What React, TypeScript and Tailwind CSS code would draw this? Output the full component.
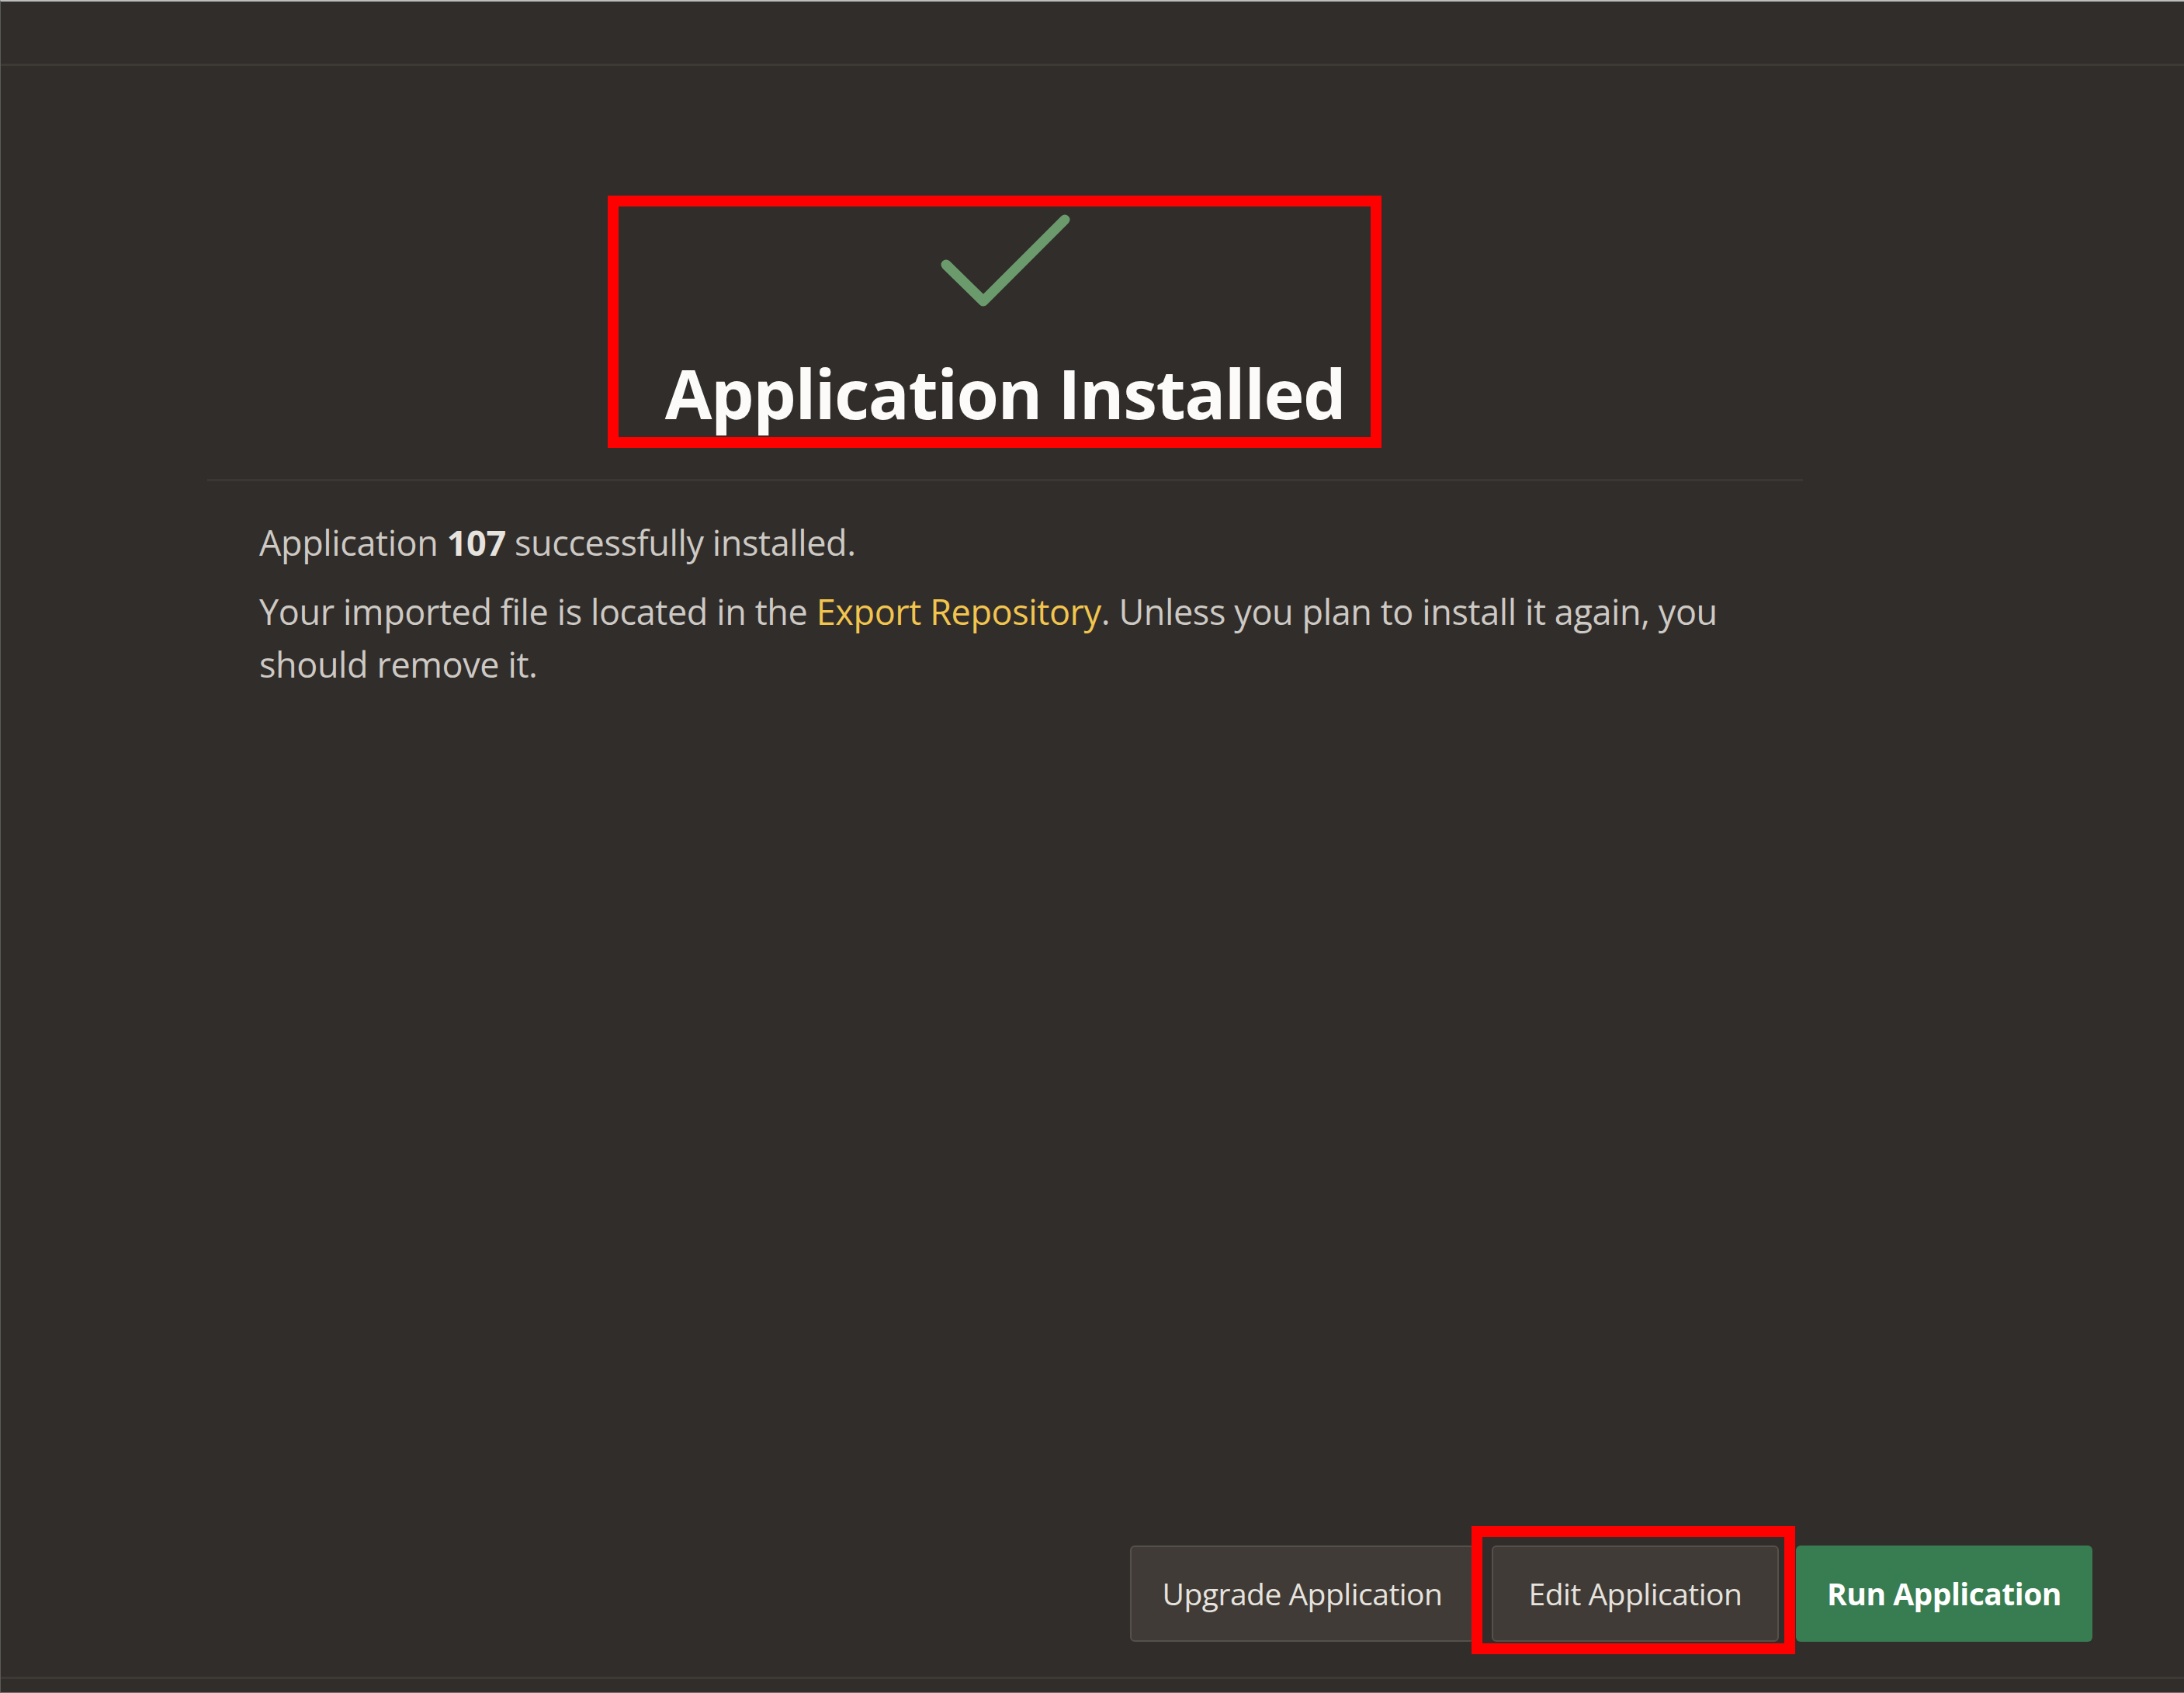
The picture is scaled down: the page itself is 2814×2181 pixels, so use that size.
export default function App() {
  return (
    <div className="relative w-[2814px] h-[2181px] bg-[#312d2a] flex flex-col border-t-2 border-t-[#bdbdbd] border-l border-l-[#5c5a58] border-b border-b-[#777470] font-['Open_Sans',sans-serif]">
      {/* page header strip */}
      <div className="h-[83px] shrink-0 border-b-[3px] border-[#3d3935]" />

      <main className="flex-1 flex flex-col">
        <div className="ml-[266px] w-[2056px] flex flex-col">
          {/* hero */}
          <div className="flex flex-col items-center pt-[188px]">
            <svg width="173" height="124" viewBox="0 0 173 124" fill="none" className="ml-[3px]">
              <polyline
                points="9,68 57,115 162,10"
                stroke="#6b9b6c"
                strokeWidth="13"
                strokeLinecap="round"
                strokeLinejoin="round"
              />
            </svg>
            <h1 className="mt-[55px] text-[88px] leading-[108px] font-bold text-[#fcfbfa] tracking-[-1.5px]">
              Application Installed
            </h1>
          </div>

          <div className="mt-[57px] border-b-[3px] border-[#3b3733]" />

          {/* message */}
          <div className="pt-[45px] px-[67px] text-[45px] leading-[68px] tracking-[-0.4px] text-[#cdc9c4]">
            <p>
              Application <span className="font-bold text-[#e6e3df]">107</span> successfully installed.
            </p>
            <p className="mt-[21px]">
              Your imported file is located in the{" "}
              <a className="text-[#f2c54f]">Export Repository</a>. Unless you plan to install it again, you
              should remove it.
            </p>
          </div>
        </div>
      </main>

      {/* button bar */}
      <div className="flex justify-end gap-[22px] pr-[118px] pb-[45px] text-[39px] tracking-[-0.5px]">
        <button className="w-[444px] h-[124px] rounded-[6px] bg-[#403b36] border-2 border-[#55504a] text-[#e6e3df]">
          Upgrade Application
        </button>
        <div className="relative">
          <button className="w-[370px] h-[124px] rounded-[6px] bg-[#403b36] border-2 border-[#55504a] text-[#e6e3df]">
            Edit Application
          </button>
          <div className="absolute -left-[26px] -right-[21px] -top-[25px] -bottom-[16px] border-[14px] border-[#ff0000] pointer-events-none" />
        </div>
        <button className="w-[382px] h-[124px] rounded-[6px] bg-[#387c51] font-bold text-white">
          Run Application
        </button>
      </div>
      <div className="h-[20px] shrink-0 border-t-[3px] border-[#3d3935]" />

      {/* annotation around title */}
      <div className="absolute left-[782px] top-[250px] w-[997px] h-[325px] border-[14px] border-[#ff0000] pointer-events-none" />
    </div>
  );
}
